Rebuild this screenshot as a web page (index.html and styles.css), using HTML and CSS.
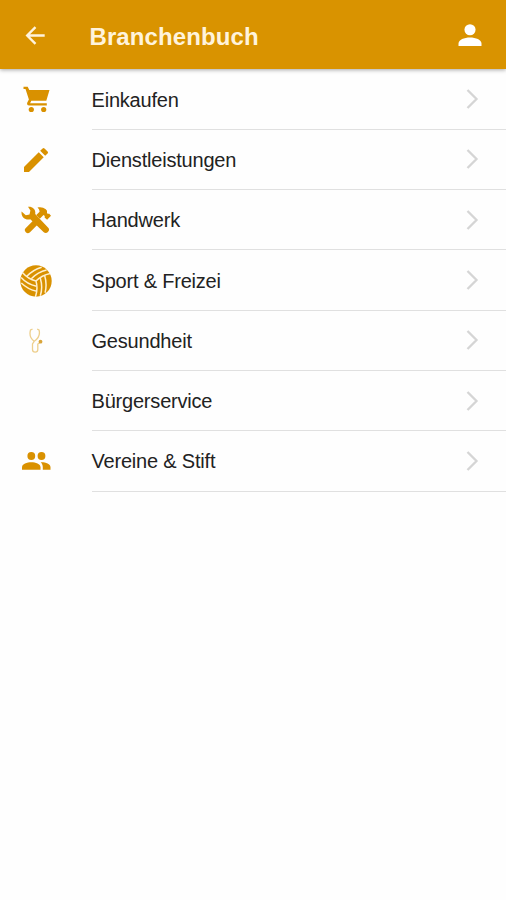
FILE: index.html
```html
<!DOCTYPE html>
<html lang="de">
<head>
<meta charset="utf-8">
<title>Branchenbuch</title>
<link rel="stylesheet" href="styles.css">
</head>
<body>
<svg class="defs" width="0" height="0"><defs>
<symbol id="chevron" viewBox="0 0 14 22"><path d="M2.500 2l9 9-9 9" fill="none" stroke="#d5d5d5" stroke-width="2.300"/></symbol>
<g id="panel"><path d="M16 16Q24 14.500 32 18M13.400 11.500Q23 9.500 31 13M10.800 7Q20 5 28.500 8"/></g>
</defs></svg>
<header class="bar">
  <svg class="back" viewBox="0 0 24 24"><path d="M22.500 12H3M12 2.500L2.500 12l9.500 9.500" fill="none" stroke="currentColor" stroke-width="2.700"/></svg>
  <h1 class="title">Branchenbuch</h1>
  <svg class="user" viewBox="0 0 24 24"><circle cx="12" cy="6" r="5.800"/><path d="M0 23v-2.500C0 16.500 6 14.200 12 14.200s12 2.300 12 6.300V23z"/></svg>
</header>
<main class="list">
  <a class="row">
    <span class="icon"><svg class="cart" viewBox="0 0 27 27"><path d="M.5.700h4.200l1.600 3.300h20.200L23.300 14.800H8.300l-1.200 2.400h16.700v2.300H6.200c-2 0-2.600-1.700-1.800-3.200l1.500-2.900L2.500 3.100h-2z"/><circle cx="8.300" cy="23.500" r="2.600"/><circle cx="20.700" cy="23.500" r="2.600"/></svg></span>
    <span class="cell"><span class="label">Einkaufen</span><svg class="chev"><use href="#chevron"/></svg></span>
  </a>
  <a class="row">
    <span class="icon"><svg class="pencil" viewBox="0 0 24 24"><path d="M3 17.250V21h3.750L17.810 9.940l-3.750-3.750L3 17.250zM20.710 7.040a1 1 0 0 0 0-1.410l-2.340-2.340a1 1 0 0 0-1.410 0l-1.830 1.830 3.750 3.750 1.830-1.830z"/></svg></span>
    <span class="cell"><span class="label">Dienstleistungen</span><svg class="chev"><use href="#chevron"/></svg></span>
  </a>
  <a class="row">
    <span class="icon"><svg class="tools" viewBox="0 0 30 28">
      <path d="M7 .8C11.500.2 15 3.500 14.200 8L27 21.500a3 3 0 0 1-4.500 4.400L9.300 13.200C4.500 14.700-.2 10.800.6 5.500l4.200 3.700 3.700-.8.900-3.800z"/>
      <path d="M12 14.800l4.200 4.200-7.200 7.200a2.900 2.900 0 0 1-4.200-4.200z"/>
      <path d="M16.500 1.500c3-.8 6-.2 8.300 1.700l1.200 1.500v2.400l1 .9 1-.5 2 2.200-3.900 4.100-2.500-2.400.2-1.400-1.300-.9-3.700 3.700-3.500-3.800 3.300-3.300c-.2-1.800-.8-3-2.100-4.200z"/>
    </svg></span>
    <span class="cell"><span class="label">Handwerk</span><svg class="chev"><use href="#chevron"/></svg></span>
  </a>
  <a class="row">
    <span class="icon"><svg class="ball" viewBox="0 0 32 32"><circle cx="16" cy="16" r="15.700"/>
      <g fill="none" stroke="#fff0cf" stroke-width="1.500">
        <use href="#panel" transform="rotate(85 16 16)"/>
        <use href="#panel" transform="rotate(205 16 16)"/>
        <use href="#panel" transform="rotate(325 16 16)"/>
      </g></svg></span>
    <span class="cell"><span class="label">Sport &amp; Freizei</span><svg class="chev"><use href="#chevron"/></svg></span>
  </a>
  <a class="row">
    <span class="icon"><svg class="steth" viewBox="0 0 14 25"><g fill="none" stroke="#edcf8d" stroke-width="1.300"><path d="M3.500 1.200L1.500 2c-1.400 5 .5 9 3.700 11.300C8.500 11 11.500 7 10 2L8.200 1.200"/><path d="M5.200 13.300L3.500 16v5.500c0 3.400 5.300 3.400 5.300 0V16l2.200-1.500"/></g><circle class="dot" cx="11.500" cy="13.700" r="1.900"/></svg></span>
    <span class="cell"><span class="label">Gesundheit</span><svg class="chev"><use href="#chevron"/></svg></span>
  </a>
  <a class="row">
    <span class="icon"></span>
    <span class="cell"><span class="label">Bürgerservice</span><svg class="chev"><use href="#chevron"/></svg></span>
  </a>
  <a class="row">
    <span class="icon"><svg class="people" viewBox="0 0 29 18"><circle cx="9.300" cy="4" r="3.900"/><circle cx="19.500" cy="4" r="3.900"/><path d="M0 17.700v-2.500c0-3.400 5-5 9.300-5s9.200 1.600 9.200 5v2.500z"/><path d="M18.700 10.300c4.700-.2 9.800 1.500 9.800 4.900v2.500h-7.700v-2.500c0-2-.7-3.500-2.100-4.900z"/></svg></span>
    <span class="cell"><span class="label">Vereine &amp; Stift</span><svg class="chev"><use href="#chevron"/></svg></span>
  </a>
</main>
</body>
</html>
```
FILE: styles.css
```css
body {
  margin: 0;
  min-height: 900px;
  background: #fefefe;
  color: #222;
  font-family: "Liberation Sans", Arial, sans-serif;
}

.defs {
  display: block;
}

.bar {
  display: flex;
  align-items: center;
  box-sizing: border-box;
  height: 69px;
  padding: 2px 24px 0 25px;
  background: #d99300;
  color: #fff3dc;
  box-shadow: 0 1px 4px rgba(0, 0, 0, .35);
}

.back {
  width: 21px;
  height: 21px;
  margin-right: 43.5px;
}

.title {
  flex: 1;
  margin: 0;
  padding-top: 3px;
  font-size: 24px;
  line-height: 30px;
  font-weight: 700;
  letter-spacing: .1px;
}

.user {
  width: 24px;
  height: 23px;
  fill: #fff;
}

.list {
  padding-top: .5px;
}

.row {
  display: flex;
  height: 60.3px;
}

.icon {
  display: flex;
  align-items: center;
  justify-content: center;
  width: 72px;
  margin-right: 19.5px;
  fill: #d99100;
}

.cell {
  display: flex;
  flex: 1;
  align-items: center;
  justify-content: space-between;
  box-sizing: border-box;
  padding-right: 27px;
  border-bottom: 1px solid #e0e0e0;
}

.label {
  padding-top: 1px;
  font-size: 20px;
  line-height: 24px;
  letter-spacing: -.2px;
}

.chev {
  width: 14px;
  height: 22px;
}

.cart {
  width: 27px;
  height: 27px;
}

.pencil {
  width: 32px;
  height: 32px;
}

.tools {
  width: 30px;
  height: 28px;
}

.ball {
  width: 32px;
  height: 32px;
}

.steth {
  width: 14px;
  height: 25px;
}

.dot {
  fill: #d9a53a;
}

.people {
  width: 29px;
  height: 18px;
}
```
